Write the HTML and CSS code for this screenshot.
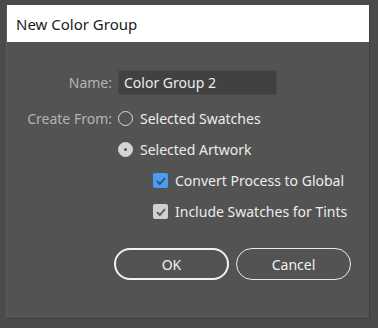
FILE: index.html
```html
<!DOCTYPE html>
<html>
<head>
<meta charset="utf-8">
<link rel="stylesheet" href="styles.css">
</head>
<body>
<div class="dialog">
  <div class="title">New Color Group</div>
  <div class="content">
    <div class="row name-row">
      <span class="label">Name:</span>
      <div class="input">Color Group 2</div>
    </div>
    <div class="row">
      <span class="label">Create From:</span>
      <span class="radio"></span>
      <span class="opt">Selected Swatches</span>
    </div>
    <div class="row">
      <span class="label"></span>
      <span class="radio on"></span>
      <span class="opt">Selected Artwork</span>
    </div>
    <div class="row check-row">
      <span class="check blue"><svg viewBox="0 0 14 14" width="14" height="14"><path d="M3 7.2 L5.8 10 L11 4.2" fill="none" stroke="#2d4f73" stroke-width="1.8"/></svg></span>
      <span class="opt">Convert Process to Global</span>
    </div>
    <div class="row check-row">
      <span class="check grey"><svg viewBox="0 0 14 14" width="14" height="14"><path d="M3 7.2 L5.8 10 L11 4.2" fill="none" stroke="#555" stroke-width="1.8"/></svg></span>
      <span class="opt">Include Swatches for Tints</span>
    </div>
    <div class="buttons">
      <div class="btn ok">OK</div>
      <div class="btn cancel">Cancel</div>
    </div>
  </div>
</div>
</body>
</html>
```
FILE: styles.css
```css
html, body {
  margin: 0;
  padding: 0;
}
body {
  width: 378px;
  height: 328px;
  background: #4b4b4b;
  font-family: "Noto Sans", "Open Sans", sans-serif;
  font-size: 14px;
  padding: 5px 8px 0 6px;
  box-sizing: border-box;
  overflow: hidden;
}
.dialog {
  width: 364px;
  height: 314px;
  background: #535353;
  border-right: 1px solid #3e3e3e;
  border-bottom: 1px solid #3e3e3e;
  border-left: 1px solid #5e5e5e;
  box-sizing: border-box;
  display: flex;
  flex-direction: column;
}
.title {
  background: #ffffff;
  color: #1a1a1a;
  height: 37px;
  font-size: 15px;
  display: flex;
  align-items: center;
  padding-left: 9px;
  flex-shrink: 0;
}
.content {
  padding-top: 28px;
  display: flex;
  flex-direction: column;
}
.row {
  display: flex;
  align-items: center;
  height: 31px;
  color: #ececec;
}
.name-row {
  height: 25px;
  margin-bottom: 8px;
}
.label {
  width: 111px;
  text-align: right;
  color: #b4b4b4;
  padding-right: 6px;
  box-sizing: border-box;
  flex-shrink: 0;
}
.input {
  width: 159px;
  height: 25px;
  background: #414141;
  border: 1px solid #4a4a4a;
  box-sizing: border-box;
  border-radius: 2px;
  color: #ececec;
  display: flex;
  align-items: center;
  padding-left: 5px;
}
.radio {
  width: 15px;
  height: 15px;
  border: 1.5px solid #d8d8d8;
  border-radius: 50%;
  box-sizing: border-box;
  margin-right: 7px;
  position: relative;
}
.radio.on {
  background: #d4d4d4;
  border-color: #d4d4d4;
}
.radio.on::after {
  content: "";
  position: absolute;
  left: 4.5px;
  top: 4.5px;
  width: 3px;
  height: 3px;
  border-radius: 50%;
  background: #555;
}
.check-row {
  padding-left: 146px;
}
.check {
  width: 15px;
  height: 15px;
  border-radius: 2px;
  margin-right: 7px;
  display: flex;
  align-items: center;
  justify-content: center;
}
.check.blue { background: #4a9cf2; }
.check.grey { background: #d0d0d0; }
.buttons {
  display: flex;
  gap: 7px;
  padding-left: 107px;
  margin-top: 21px;
}
.btn {
  width: 115px;
  height: 32px;
  box-sizing: border-box;
  border-radius: 16px;
  display: flex;
  align-items: center;
  justify-content: center;
  color: #f0f0f0;
}
.btn.ok {
  border: 2px solid #f2f2f2;
}
.btn.cancel {
  border: 1.5px solid #e8e8e8;
}
```
